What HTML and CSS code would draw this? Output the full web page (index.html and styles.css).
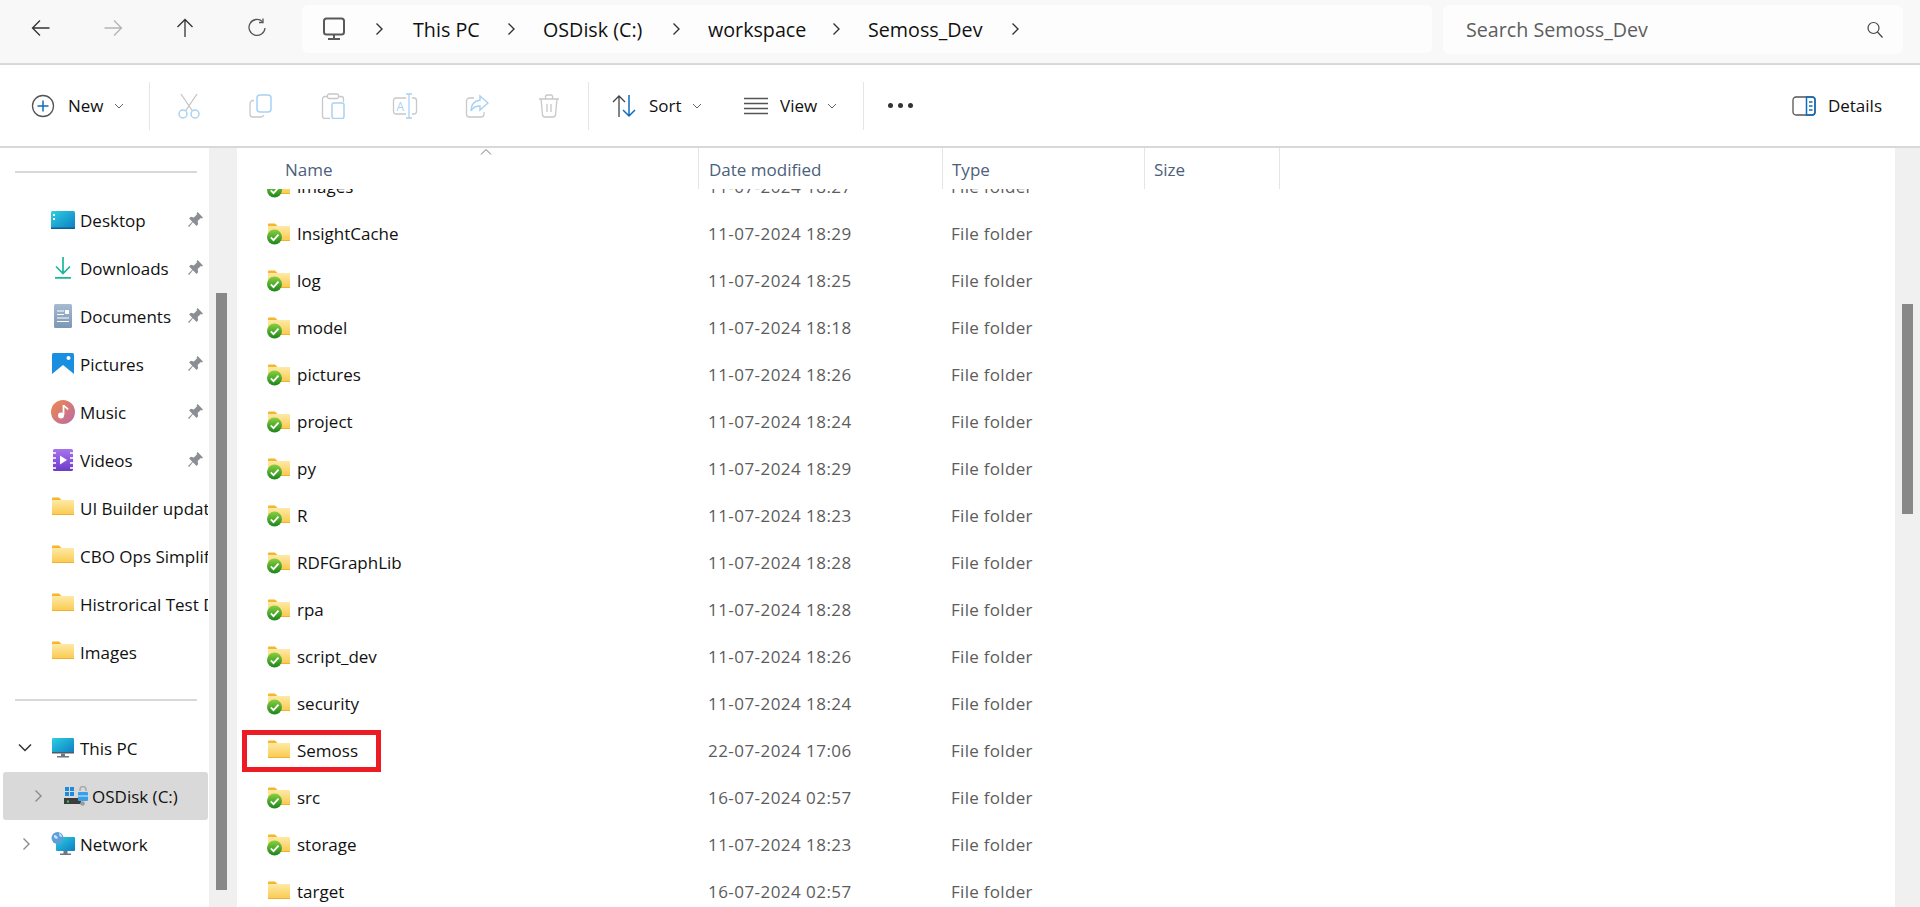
FILE: index.html
```html
<!DOCTYPE html>
<html lang="en">
<head>
    <meta charset="UTF-8">
    <title>Semoss_Dev - File Explorer</title>
    <link rel="stylesheet" href="styles.css">
</head>
<body>
    <svg class="defs" width="0" height="0">
        <defs>
            <linearGradient id="folderFill" x1="0" y1="0" x2="0" y2="1">
                <stop offset="0" stop-color="#fdeaa6"/>
                <stop offset="1" stop-color="#fbc94e"/>
            </linearGradient>
            <linearGradient id="checkFill" x1="0" y1="0" x2="0" y2="1">
                <stop offset="0" stop-color="#8ad03f"/>
                <stop offset="1" stop-color="#1a861a"/>
            </linearGradient>
            <linearGradient id="screenFill" x1="0" y1="0" x2="1" y2="1">
                <stop offset="0" stop-color="#2bd0e0"/>
                <stop offset="1" stop-color="#0f7cc4"/>
            </linearGradient>
            <linearGradient id="docFill" x1="0" y1="0" x2="0" y2="1">
                <stop offset="0" stop-color="#a6bbd2"/>
                <stop offset="1" stop-color="#7d96b4"/>
            </linearGradient>
            <linearGradient id="musicFill" x1="0" y1="0" x2="1" y2="1">
                <stop offset="0" stop-color="#f0894c"/>
                <stop offset="1" stop-color="#b96aa8"/>
            </linearGradient>
            <linearGradient id="videoFill" x1="0" y1="0" x2="0" y2="1">
                <stop offset="0" stop-color="#a874ee"/>
                <stop offset="1" stop-color="#6a3cc8"/>
            </linearGradient>
            <symbol id="folder" viewBox="0 0 24 22">
                <path d="M1 1.5a1 1 0 0 1 1-1h6l2.5 2.5H1z" fill="#f4b62c"/>
                <path d="M1 3h22v15H1z" fill="url(#folderFill)"/>
                <path d="M1 17.3h22V18H1z" fill="#e9a825"/>
            </symbol>
            <symbol id="folderSync" viewBox="0 0 24 22">
                <use href="#folder"/>
                <circle cx="7.5" cy="14" r="7.5" fill="url(#checkFill)"/>
                <path d="M3.8 14.3l2.7 2.9 5-5.6" fill="none" stroke="#fff" stroke-width="1.8"/>
            </symbol>
            <symbol id="pin" viewBox="0 0 16 16">
                <path d="M10 1l5 5-1 1-1-.5-3 3 .5 3L9 14 5.500 10.500 2 15l-1-1 4-4-3-3 1.500-1.500 3 .5 3-3L9 2z" fill="#8b8f94"/>
            </symbol>
            <symbol id="chevron" viewBox="0 0 10 14">
                <path d="M2.5 1.5L8 7l-5.500 5.500" fill="none" stroke="currentColor" stroke-width="1.4"/>
            </symbol>
            <symbol id="caret" viewBox="0 0 10 6">
                <path d="M1 1l4 4 4-4" fill="none" stroke="#666" stroke-width="1"/>
            </symbol>
        </defs>
    </svg>

    <header class="navbar">
        <div class="nav-buttons">
            <button class="nav-btn"><svg width="20" height="20" viewBox="0 0 20 20"><path d="M18.5 10H1.500M9 2.500L1.500 10 9 17.500" fill="none" stroke="#333" stroke-width="1.3"/></svg></button>
            <button class="nav-btn"><svg width="20" height="20" viewBox="0 0 20 20"><path d="M1.5 10h17M11 2.500l7.500 7.500-7.500 7.500" fill="none" stroke="#b4b4b4" stroke-width="1.3"/></svg></button>
            <button class="nav-btn"><svg width="20" height="20" viewBox="0 0 20 20"><path d="M10 19V1.500M2.500 9L10 1.500 17.500 9" fill="none" stroke="#333" stroke-width="1.3"/></svg></button>
            <button class="nav-btn"><svg width="20" height="20" viewBox="0 0 20 20"><path d="M15.5 3.600A8 8 0 1 0 18 10" fill="none" stroke="#555" stroke-width="1.3"/><path d="M16 .5v4h-4" fill="none" stroke="#555" stroke-width="1.3"/></svg></button>
        </div>
        <div class="address">
            <svg class="pc-icon" width="24" height="24" viewBox="0 0 24 24"><rect x="2" y="1.5" width="20" height="16" rx="2.5" fill="none" stroke="#595959" stroke-width="2"/><path d="M12 18v3M6 22h12" stroke="#595959" stroke-width="2" fill="none"/></svg>
            <svg class="crumb-sep"><use href="#chevron"/></svg>
            <span class="crumb crumb-pc">This PC</span>
            <svg class="crumb-sep"><use href="#chevron"/></svg>
            <span class="crumb crumb-disk">OSDisk (C:)</span>
            <svg class="crumb-sep"><use href="#chevron"/></svg>
            <span class="crumb crumb-work">workspace</span>
            <svg class="crumb-sep"><use href="#chevron"/></svg>
            <span class="crumb crumb-dev">Semoss_Dev</span>
            <svg class="crumb-sep"><use href="#chevron"/></svg>
        </div>
        <div class="search">
            <span>Search Semoss_Dev</span>
            <svg width="16" height="18" viewBox="0 0 16 18"><circle cx="6.5" cy="7" r="5.5" fill="none" stroke="#444" stroke-width="1.2"/><path d="M10.5 11l5 5.500" stroke="#444" stroke-width="1.2"/></svg>
        </div>
    </header>

    <div class="toolbar">
        <button class="tool tool-new">
            <svg width="24" height="24" viewBox="0 0 24 24"><circle cx="12" cy="12" r="10.5" fill="none" stroke="#555" stroke-width="1.3"/><path d="M12 6.500v11M6.500 12h11" stroke="#0f6cbd" stroke-width="1.5"/></svg>
            <span>New</span>
            <svg class="caret"><use href="#caret"/></svg>
        </button>
        <div class="tool-sep"></div>
        <button class="icon-tool icon-tool-first"><svg width="24" height="26" viewBox="0 0 24 26"><path d="M4 1l11.500 17M20 1L8.500 18" stroke="#c4c4c4" stroke-width="1.3" fill="none"/><circle cx="6" cy="21" r="4" fill="none" stroke="#a8d2f4" stroke-width="1.5"/><circle cx="18" cy="21" r="4" fill="none" stroke="#a8d2f4" stroke-width="1.5"/></svg></button>
        <button class="icon-tool"><svg width="24" height="24" viewBox="0 0 24 24"><path d="M5 6.500H4a3 3 0 0 0-3 3V20a3 3 0 0 0 3 3h8a3 3 0 0 0 2.800-2" fill="none" stroke="#c8c8c8" stroke-width="1.3"/><rect x="8" y="1" width="14" height="17" rx="3" fill="none" stroke="#a8d2f4" stroke-width="1.5"/></svg></button>
        <button class="icon-tool"><svg width="24" height="26" viewBox="0 0 24 26"><path d="M6 3.500H4a2.500 2.500 0 0 0-2.500 2.500v17A2.500 2.500 0 0 0 4 25.500h5M18 3.500h2A2.500 2.500 0 0 1 22.500 6v3" fill="none" stroke="#c8c8c8" stroke-width="1.3"/><rect x="6.5" y="1" width="11" height="4.5" rx="1.5" fill="none" stroke="#c8c8c8" stroke-width="1.3"/><rect x="11" y="10" width="12" height="15.5" rx="2" fill="none" stroke="#a8d2f4" stroke-width="1.5"/></svg></button>
        <button class="icon-tool"><svg width="26" height="26" viewBox="0 0 26 26"><path d="M14 5H4a2.500 2.500 0 0 0-2.500 2.500v11A2.500 2.500 0 0 0 4 21h10M20 5h2a2.500 2.500 0 0 1 2.500 2.500v11A2.500 2.500 0 0 1 22 21h-2" fill="none" stroke="#c8c8c8" stroke-width="1.3"/><path d="M14 1h6M14 25h6M17 1v24" stroke="#a8d2f4" stroke-width="1.3" fill="none"/><text x="4.5" y="17.5" class="rename-a">A</text></svg></button>
        <button class="icon-tool"><svg width="24" height="24" viewBox="0 0 24 24"><path d="M9 4H4.500A3 3 0 0 0 1.500 7v13a3 3 0 0 0 3 3H16a3 3 0 0 0 3-3v-2" fill="none" stroke="#c8c8c8" stroke-width="1.3"/><path d="M15 2l8 7-8 7v-4c-4 0-7 1-9 5 0-6 3-10 9-11z" fill="none" stroke="#a8d2f4" stroke-width="1.5"/></svg></button>
        <button class="icon-tool"><svg width="22" height="24" viewBox="0 0 22 24"><path d="M1 5h20M7.500 5V2.500a1.500 1.500 0 0 1 1.500-1.500h4a1.500 1.500 0 0 1 1.500 1.500V5M3 5l1.500 16a2.500 2.500 0 0 0 2.500 2h8a2.500 2.500 0 0 0 2.500-2L19 5M9 10v8M13 10v8" fill="none" stroke="#c8c8c8" stroke-width="1.3"/></svg></button>
        <div class="tool-sep tool-sep-second"></div>
        <button class="tool tool-sort">
            <svg width="26" height="24" viewBox="0 0 26 24"><path d="M7 23V2M1 8l6-6 6 6" fill="none" stroke="#444" stroke-width="1.3"/><path d="M17 1v21M11 16l6 6 6-6" fill="none" stroke="#0f6cbd" stroke-width="1.5"/></svg>
            <span>Sort</span>
            <svg class="caret"><use href="#caret"/></svg>
        </button>
        <button class="tool tool-view">
            <svg width="24" height="18" viewBox="0 0 24 18"><path d="M0 1.500h24M0 6.500h24M0 11.500h24M0 16.500h24" stroke="#555" stroke-width="1.3"/></svg>
            <span>View</span>
            <svg class="caret"><use href="#caret"/></svg>
        </button>
        <div class="tool-sep"></div>
        <div class="more"><i></i><i></i><i></i></div>
        <button class="tool tool-details">
            <svg width="24" height="20" viewBox="0 0 24 20"><rect x="1" y="1" width="22" height="18" rx="3" fill="none" stroke="#555" stroke-width="1.3"/><path d="M14.500 1H20a3 3 0 0 1 3 3v12a3 3 0 0 1-3 3h-5.500z" fill="none" stroke="#0f6cbd" stroke-width="1.5"/><path d="M17 6h3.500M17 10h3.500M17 14h3.500" stroke="#0f6cbd" stroke-width="1.3"/></svg>
            <span>Details</span>
        </button>
    </div>

    <main class="body">
        <nav class="sidebar">
            <div class="side-line side-line-top"></div>
            <div class="side-item">
                <svg class="side-icon" width="24" height="18" viewBox="0 0 24 18"><rect width="24" height="18" rx="1.5" fill="url(#screenFill)"/><path d="M2 3h2v2H2zM2 7h2v2H2z" fill="#fff"/><path d="M0 16.500h24V18H0z" fill="#0a5f96"/></svg>
                <span>Desktop</span><svg class="pin"><use href="#pin"/></svg>
            </div>
            <div class="side-item">
                <svg class="side-icon" width="24" height="22" viewBox="0 0 24 22"><path d="M12 0v16M5 9.500l7 7 7-7M4 20.800h16" fill="none" stroke="#1fb598" stroke-width="1.7"/></svg>
                <span>Downloads</span><svg class="pin"><use href="#pin"/></svg>
            </div>
            <div class="side-item">
                <svg class="side-icon" width="24" height="24" viewBox="0 0 24 24"><rect x="3" width="18" height="24" rx="1.5" fill="url(#docFill)"/><path d="M6 7h7M6 10.500h7M6 14h12M6 17.500h12" stroke="#fff" stroke-width="1.1"/><rect x="14" y="6" width="4" height="4" fill="#fff"/></svg>
                <span>Documents</span><svg class="pin"><use href="#pin"/></svg>
            </div>
            <div class="side-item">
                <svg class="side-icon" width="24" height="22" viewBox="0 0 24 22"><rect x="1" width="22" height="22" rx="1.5" fill="#1a8ee0"/><circle cx="17.5" cy="5" r="2" fill="#fff"/><path d="M1 21l11-9 11 9v1H1z" fill="#fff"/></svg>
                <span>Pictures</span><svg class="pin"><use href="#pin"/></svg>
            </div>
            <div class="side-item">
                <svg class="side-icon" width="24" height="24" viewBox="0 0 24 24"><circle cx="12" cy="12" r="12" fill="url(#musicFill)"/><path d="M12.500 5v10" stroke="#fff" stroke-width="1.8"/><path d="M12.500 5c1 2.500 3.500 2.500 4.500 4.500" stroke="#fff" stroke-width="1.8" fill="none"/><circle cx="10" cy="15.5" r="3" fill="#fff"/></svg>
                <span>Music</span><svg class="pin"><use href="#pin"/></svg>
            </div>
            <div class="side-item">
                <svg class="side-icon" width="24" height="22" viewBox="0 0 24 22"><rect x="2" width="20" height="22" rx="1.5" fill="url(#videoFill)"/><path d="M2 3h3v2H2zM2 8h3v2H2zM2 13h3v2H2zM2 18h3v2H2zM19 3h3v2h-3zM19 8h3v2h-3zM19 13h3v2h-3zM19 18h3v2h-3z" fill="#e6d8fa"/><path d="M9 6.500l7 4.500-7 4.500z" fill="#fff"/></svg>
                <span>Videos</span><svg class="pin"><use href="#pin"/></svg>
            </div>
            <div class="side-item"><svg class="side-icon" width="24" height="22"><use href="#folder"/></svg><span>UI Builder updates</span></div>
            <div class="side-item"><svg class="side-icon" width="24" height="22"><use href="#folder"/></svg><span>CBO Ops Simplification</span></div>
            <div class="side-item"><svg class="side-icon" width="24" height="22"><use href="#folder"/></svg><span>Histrorical Test Data</span></div>
            <div class="side-item"><svg class="side-icon" width="24" height="22"><use href="#folder"/></svg><span>Images</span></div>
            <div class="side-line side-line-bottom"></div>
            <div class="side-item tree">
                <svg class="expander expander-down" width="14" height="10" viewBox="0 0 14 10"><path d="M1 1.500l6 6 6-6" fill="none" stroke="#333" stroke-width="1.5"/></svg>
                <svg class="side-icon" width="24" height="20" viewBox="0 0 24 20"><rect x="1" width="22" height="15" rx="1" fill="url(#screenFill)"/><path d="M1 14h22v1.500H1z" fill="#4f5b66"/><path d="M10 15.500h4V18h-4zM6 18h12v1.500H6z" fill="#6e7780"/></svg>
                <span>This PC</span>
            </div>
            <div class="side-item tree selected">
                <svg class="expander expander-sub"><use href="#chevron"/></svg>
                <svg class="drive-icon" width="24" height="20" viewBox="0 0 24 20"><path d="M1 1h4v4H1zM6 1h4v4H6zM1 6h4v4H1zM6 6h4v4H6z" fill="#1f8be0"/><path d="M0 12h17v6H0z" fill="#3c3c3c"/><path d="M3 14.500h2v2H3z" fill="#32d060"/><path d="M16 5V3.500a3 3 0 0 1 6 0V5" fill="none" stroke="#a8a8a8" stroke-width="1.5"/><rect x="14" y="6" width="10" height="9" rx="1" fill="#37a0e8"/><path d="M14 10h10" stroke="#d8e8f4"/><circle cx="18.5" cy="17.5" r="2.3" fill="#9a9a9a"/></svg>
                <span>OSDisk (C:)</span>
            </div>
            <div class="side-item tree">
                <svg class="expander"><use href="#chevron"/></svg>
                <svg class="side-icon" width="24" height="24" viewBox="0 0 24 24"><rect x="5" y="5" width="19" height="14" rx="1" fill="url(#screenFill)"/><path d="M12.500 19h4v2.500h-4zM9 21.500h11V23H9z" fill="#6e7780"/><circle cx="6.5" cy="6" r="6" fill="#5d9fd8"/><path d="M3 3c2 0 3 1 4 3-1 1-3 1-4-1zM8 1c2 1 3 2 3 4-2 0-3-1-3-4z" fill="#cfe6f7"/></svg>
                <span>Network</span>
            </div>
        </nav>
        <div class="side-scroll"><div class="side-thumb"></div></div>

        <section class="files">
            <div class="list-head">
                <div class="col col-name">Name<svg class="sort-mark" width="12" height="6" viewBox="0 0 12 6"><path d="M1 5.500l5-5 5 5" fill="none" stroke="#777"/></svg></div>
                <div class="col col-date">Date modified</div>
                <div class="col col-type">Type</div>
                <div class="col col-size">Size</div>
            </div>
            <div class="list">
                <div class="rows">
                    <div class="row"><svg class="file-icon"><use href="#folderSync"/></svg><span class="name">images</span><span class="date">11-07-2024 18:27</span><span class="type">File folder</span></div>
                    <div class="row"><svg class="file-icon"><use href="#folderSync"/></svg><span class="name">InsightCache</span><span class="date">11-07-2024 18:29</span><span class="type">File folder</span></div>
                    <div class="row"><svg class="file-icon"><use href="#folderSync"/></svg><span class="name">log</span><span class="date">11-07-2024 18:25</span><span class="type">File folder</span></div>
                    <div class="row"><svg class="file-icon"><use href="#folderSync"/></svg><span class="name">model</span><span class="date">11-07-2024 18:18</span><span class="type">File folder</span></div>
                    <div class="row"><svg class="file-icon"><use href="#folderSync"/></svg><span class="name">pictures</span><span class="date">11-07-2024 18:26</span><span class="type">File folder</span></div>
                    <div class="row"><svg class="file-icon"><use href="#folderSync"/></svg><span class="name">project</span><span class="date">11-07-2024 18:24</span><span class="type">File folder</span></div>
                    <div class="row"><svg class="file-icon"><use href="#folderSync"/></svg><span class="name">py</span><span class="date">11-07-2024 18:29</span><span class="type">File folder</span></div>
                    <div class="row"><svg class="file-icon"><use href="#folderSync"/></svg><span class="name">R</span><span class="date">11-07-2024 18:23</span><span class="type">File folder</span></div>
                    <div class="row"><svg class="file-icon"><use href="#folderSync"/></svg><span class="name">RDFGraphLib</span><span class="date">11-07-2024 18:28</span><span class="type">File folder</span></div>
                    <div class="row"><svg class="file-icon"><use href="#folderSync"/></svg><span class="name">rpa</span><span class="date">11-07-2024 18:28</span><span class="type">File folder</span></div>
                    <div class="row"><svg class="file-icon"><use href="#folderSync"/></svg><span class="name">script_dev</span><span class="date">11-07-2024 18:26</span><span class="type">File folder</span></div>
                    <div class="row"><svg class="file-icon"><use href="#folderSync"/></svg><span class="name">security</span><span class="date">11-07-2024 18:24</span><span class="type">File folder</span></div>
                    <div class="row"><svg class="file-icon"><use href="#folder"/></svg><span class="name">Semoss</span><span class="date">22-07-2024 17:06</span><span class="type">File folder</span><div class="callout"></div></div>
                    <div class="row"><svg class="file-icon"><use href="#folderSync"/></svg><span class="name">src</span><span class="date">16-07-2024 02:57</span><span class="type">File folder</span></div>
                    <div class="row"><svg class="file-icon"><use href="#folderSync"/></svg><span class="name">storage</span><span class="date">11-07-2024 18:23</span><span class="type">File folder</span></div>
                    <div class="row"><svg class="file-icon"><use href="#folder"/></svg><span class="name">target</span><span class="date">16-07-2024 02:57</span><span class="type">File folder</span></div>
                </div>
            </div>
        </section>
        <div class="main-scroll"><div class="main-thumb"></div></div>
    </main>
</body>
</html>
```

FILE: styles.css
```css
* {
    margin: 0;
    padding: 0;
    box-sizing: border-box;
}

html, body {
    height: 100%;
    overflow: hidden;
}

body {
    display: flex;
    flex-direction: column;
    background-color: #fff;
    font-family: "Open Sans", "Noto Sans", sans-serif;
    font-size: 17px;
    color: #111;
}

button {
    display: flex;
    align-items: center;
    background: none;
    border: none;
    font: inherit;
    color: inherit;
}

.defs {
    position: absolute;
}

/* Address bar */
.navbar {
    display: flex;
    align-items: flex-start;
    height: 65px;
    flex-shrink: 0;
    padding: 5px 17px 0 0;
    background-color: #f8f8f8;
    border-bottom: 2px solid #d8d8d8;
}

.nav-buttons {
    display: flex;
    width: 302px;
    padding: 13px 0 0 5px;
}

.nav-btn {
    justify-content: center;
    width: 72px;
    height: 20px;
}

.address {
    display: flex;
    align-items: center;
    width: 1130px;
    height: 48px;
    padding-left: 20px;
    background-color: #fdfdfd;
    border-radius: 6px;
    font-size: 19.7px;
}

.pc-icon {
    margin-right: 28px;
}

.crumb-sep {
    width: 10px;
    height: 14px;
    color: #333;
}

.crumb-pc { width: 122px; padding-left: 29px; }
.crumb-disk { width: 155px; padding-left: 27px; }
.crumb-work { width: 150px; padding-left: 27px; }
.crumb-dev { width: 169px; padding-left: 27px; }

.search {
    display: flex;
    align-items: center;
    justify-content: space-between;
    width: 460px;
    height: 49px;
    margin-left: 11px;
    padding: 0 20px 0 23px;
    background-color: #fdfdfd;
    border-radius: 6px;
    font-size: 19.7px;
    color: #5d5d5d;
}

/* Command bar */
.toolbar {
    display: flex;
    align-items: center;
    height: 83px;
    flex-shrink: 0;
    padding-left: 31px;
    border-bottom: 2px solid #d8d8d8;
}

.tool {
    height: 48px;
}

.tool-new { width: 118px; }
.tool-new span { margin-left: 13px; }
.tool-sort { width: 132px; margin-left: 23px; }
.tool-sort span { margin-left: 11px; }
.tool-view { width: 119px; }
.tool-view span { margin-left: 12px; }
.tool span + .caret { margin-left: 10px; }

.tool-sep {
    width: 1px;
    height: 48px;
    background-color: #e6e6e6;
}

.tool-sep-second {
    margin-left: 3px;
}

.icon-tool {
    justify-content: center;
    width: 72px;
    height: 48px;
}

.icon-tool-first {
    margin-left: 3px;
}

.caret {
    width: 10px;
    height: 6px;
}

.rename-a {
    font-size: 12px;
    fill: #a8d2f4;
}

.more {
    display: flex;
    gap: 5px;
    margin-left: 24px;
}

.more i {
    width: 5px;
    height: 5px;
    border-radius: 50%;
    background-color: #333;
}

.tool-details {
    margin-left: auto;
    margin-right: 38px;
}

.tool-details span { margin-left: 12px; }

/* Nav pane */
.body {
    display: flex;
    flex: 1;
    min-height: 0;
}

.sidebar {
    width: 209px;
    flex-shrink: 0;
    overflow: hidden;
}

.side-line {
    height: 2px;
    margin-left: 15px;
    margin-right: 12px;
    background-color: #d8d8d8;
}

.side-line-top { margin-top: 23px; margin-bottom: 23px; }
.side-line-bottom { margin-top: 23px; margin-bottom: 23px; }

.side-item {
    position: relative;
    display: flex;
    align-items: center;
    height: 48px;
    margin: 0 1px 0 3px;
    padding-left: 48px;
    white-space: nowrap;
    overflow: hidden;
}

.side-icon {
    flex-shrink: 0;
    margin-right: 5px;
}

.side-item .pin {
    position: absolute;
    left: 184px;
    top: 15px;
    width: 17px;
    height: 17px;
}

.side-item.selected {
    padding-left: 61px;
    background-color: #d9d9d9;
    border-radius: 3px;
}

.drive-icon {
    flex-shrink: 0;
    margin-right: 4px;
}

.expander {
    position: absolute;
    left: 18px;
    top: 17px;
    width: 10px;
    height: 14px;
    color: #8a8a8a;
}

.expander-down {
    left: 15px;
    top: 19px;
    width: 14px;
    height: 10px;
}

.expander-sub {
    left: 30px;
}

.side-scroll {
    width: 26px;
    flex-shrink: 0;
    padding: 145px 8px 0 7px;
    background-color: #f0f0f0;
}

.side-thumb {
    height: 597px;
    background-color: #888;
}

/* File list */
.files {
    display: flex;
    flex-direction: column;
    flex: 1;
    min-width: 0;
    border-left: 2px solid #f0f0f0;
}

.list-head {
    display: flex;
    height: 41px;
    flex-shrink: 0;
    color: #4c607a;
}

.col {
    position: relative;
    padding-top: 10px;
    border-right: 1px solid #e5e5e5;
}

.col-name { width: 462px; padding-left: 48px; }
.col-date { width: 244px; padding-left: 10px; }
.col-type { width: 202px; padding-left: 9px; }
.col-size { width: 135px; padding-left: 9px; }

.sort-mark {
    position: absolute;
    left: 243px;
    top: 1px;
}

.list {
    flex: 1;
    overflow: hidden;
}

.rows {
    margin-top: -26px;
}

.row {
    position: relative;
    display: flex;
    align-items: center;
    height: 47px;
}

.file-icon {
    flex-shrink: 0;
    width: 24px;
    height: 22px;
    margin-left: 30px;
    margin-right: 6px;
}

.name { width: 411px; }
.date { width: 243px; color: #5c5c5c; letter-spacing: 0.45px; }
.type { color: #5c5c5c; letter-spacing: 0.3px; }

.callout {
    position: absolute;
    left: 5px;
    top: 3px;
    width: 139px;
    height: 42px;
    border: 5px solid #ed1c24;
}

.main-scroll {
    width: 25px;
    flex-shrink: 0;
    padding: 156px 7px 0;
    background-color: #f0f0f0;
}

.main-thumb {
    height: 210px;
    background-color: #888;
}
```
